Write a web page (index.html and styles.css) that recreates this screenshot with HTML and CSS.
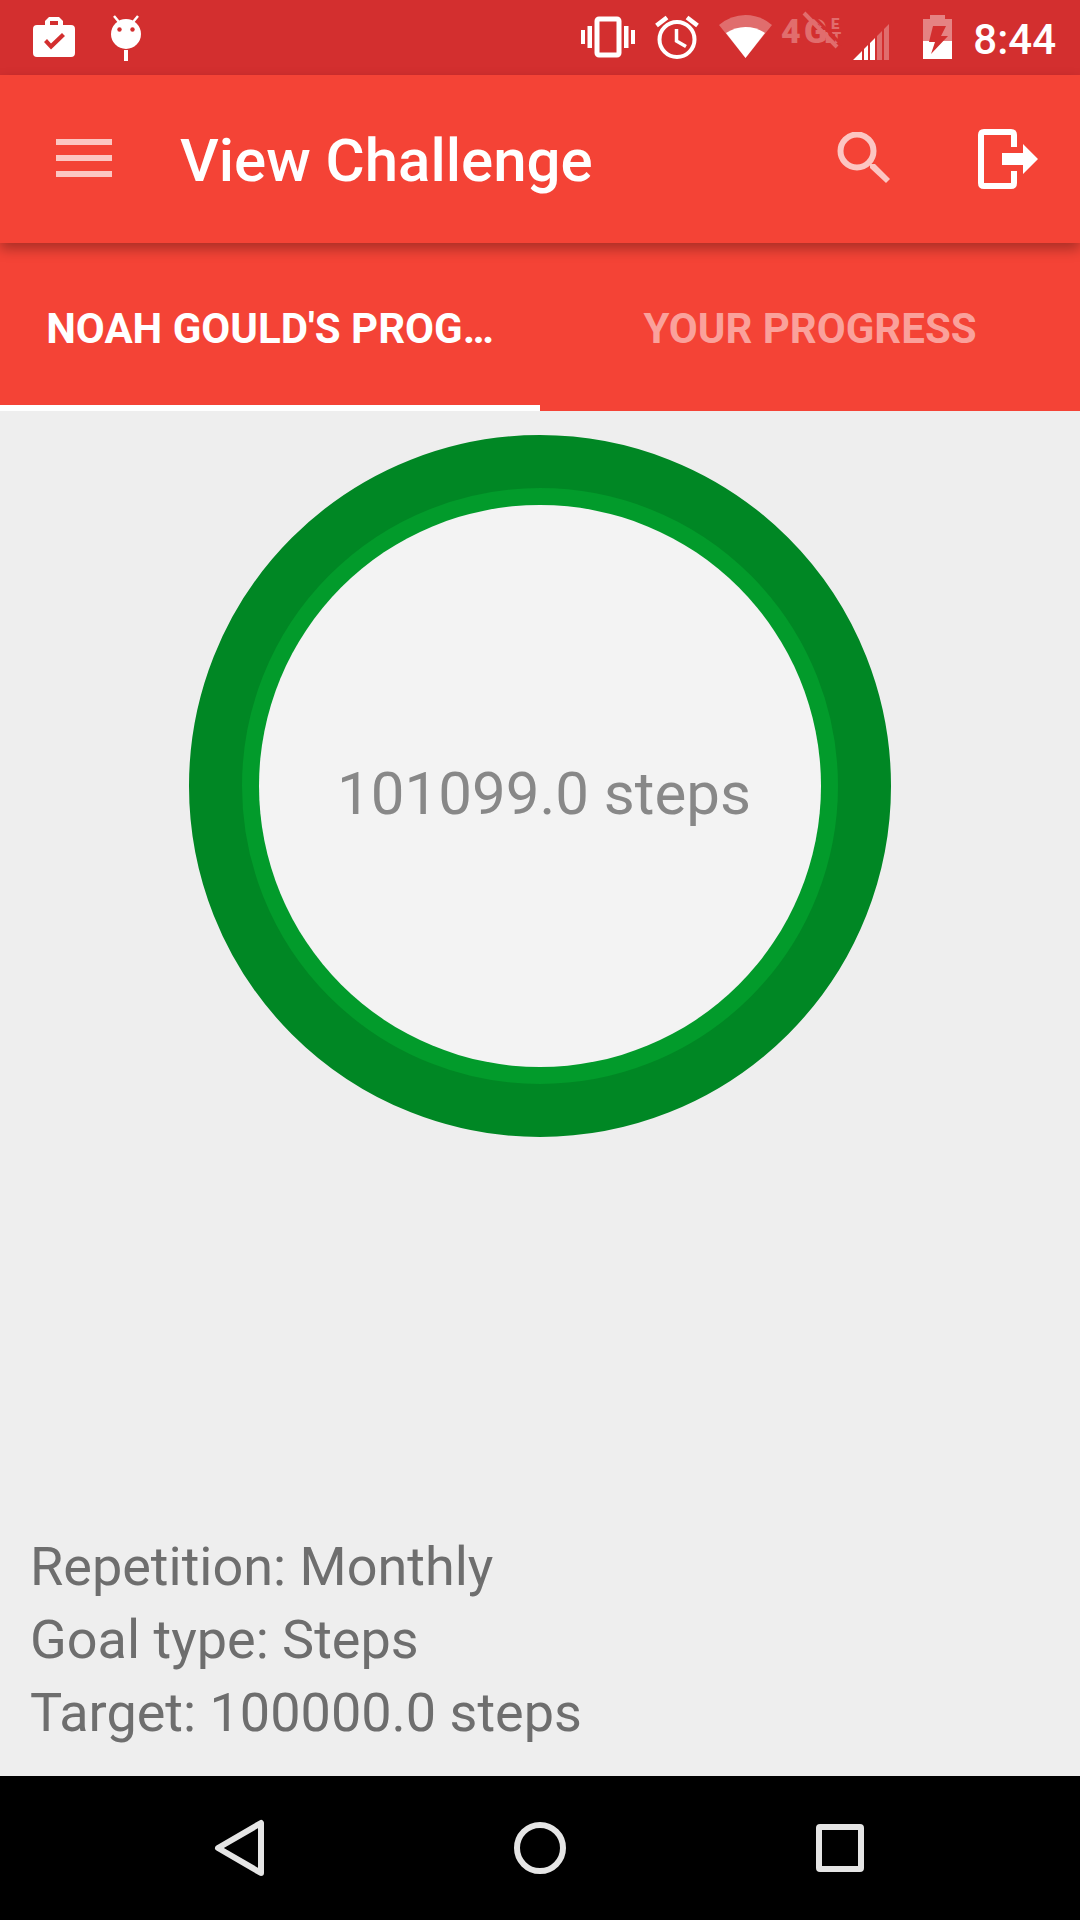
FILE: index.html
```html
<!DOCTYPE html>
<html lang="en">
<head>
<meta charset="utf-8">
<meta name="viewport" content="width=device-width, initial-scale=1">
<title>View Challenge</title>
<link rel="stylesheet" href="styles.css">
</head>
<body>
<div class="screen">
  <div class="status">
    <div class="status-group">
      <svg width="42" height="75" viewBox="0 0 42 75" aria-hidden="true">
        <path fill="#fff" fill-rule="evenodd" d="M4 25H12V21L16 17H26L30 21V25H38Q42 25 42 29V53Q42 57 38 57H4Q0 57 0 53V29Q0 25 4 25ZM17 21V25H25V21ZM11 42L18 49.500L32 36L29 33L18 43.500L14 39Z"/>
      </svg>
      <svg width="30" height="75" viewBox="0 0 30 75" aria-hidden="true">
        <path stroke="#fff" stroke-width="2.500" d="M3 16L8 22M27 16L22 22"/>
        <path stroke="#fff" stroke-width="4" d="M15 50V61"/>
        <circle cx="15" cy="34" r="15" fill="#fff"/>
        <circle cx="8.500" cy="29.500" r="2.200" fill="#d32f2f"/>
        <circle cx="21.500" cy="29.500" r="2.200" fill="#d32f2f"/>
      </svg>
    </div>
    <div class="status-group status-end">
      <svg width="68" height="75" viewBox="0 0 68 75" aria-hidden="true">
        <rect x="23" y="19" width="22" height="36" rx="2" fill="none" stroke="#fff" stroke-width="5"/>
        <path fill="#fff" d="M7 30h4v14h-4zM13.500 26h4.500v22h-4.500zM50 26h4.500v22H50zM57 30h4v14h-4z"/>
      </svg>
      <svg width="69" height="75" viewBox="0 0 69 75" aria-hidden="true">
        <circle cx="35" cy="39.500" r="17.500" fill="none" stroke="#fff" stroke-width="4"/>
        <path fill="none" stroke="#fff" stroke-width="3.500" d="M34.500 29V41L44 46.500"/>
        <path stroke="#fff" stroke-width="4.500" d="M14.500 25.500L25 17.500M45 17.500L55.500 25.500"/>
      </svg>
      <svg width="69" height="75" viewBox="0 0 69 75" aria-hidden="true">
        <path fill="#fff" fill-opacity=".3" d="M8 25Q20 15 34.500 15T61 25L34.500 58Z"/>
        <path fill="#fff" d="M15 33Q24 27 34.500 27T54 33L34.500 58Z"/>
      </svg>
      <svg class="network" width="66" height="75" viewBox="0 0 66 75" role="img" aria-label="4G LTE off">
        <text class="network-main" x="1 24" y="43">4G</text>
        <text class="network-sub" x="51" y="29">E</text>
        <text class="network-sub" x="45" y="43">LT</text>
        <path stroke="#d32f2f" stroke-width="3" d="M27 10L62 45"/>
        <path stroke="#e16d6d" stroke-width="4" d="M24 13L57 47"/>
      </svg>
      <svg width="54" height="75" viewBox="0 0 54 75" aria-hidden="true">
        <path fill="#fff" d="M7 60L16 51V60ZM18 60V49L22 45V60ZM24 60V43L29 38V60Z"/>
        <path fill="#fff" fill-opacity=".3" d="M31 60V36L36 31V60ZM38 60V29L43 24V60Z"/>
      </svg>
      <svg width="69" height="75" viewBox="0 0 69 75" aria-hidden="true">
        <path fill="#e58383" d="M23 19H30V15H45V19H52V41H23Z"/>
        <path fill="#fff" d="M23 41H52V59H23Z"/>
        <path fill="#d32f2f" d="M33 26H46L41 36H48L31 54L35 42H29Z"/>
      </svg>
      <time class="clock">8:44</time>
    </div>
  </div>

  <header class="toolbar">
    <button class="icon-button" aria-label="Menu">
      <svg width="56" height="48" viewBox="0 0 56 48"><path stroke="#fcc6c2" stroke-width="6" d="M0 7H56M0 23H56M0 39H56"/></svg>
    </button>
    <h1 class="title">View Challenge</h1>
    <button class="icon-button" aria-label="Search">
      <svg width="54" height="54" viewBox="0 0 54 54"><circle cx="20" cy="19" r="16.500" fill="none" stroke="#fcc6c2" stroke-width="6"/><path fill="#fcc6c2" d="M33 32H38L53 47L49 51L33 36Z"/></svg>
    </button>
    <button class="icon-button" aria-label="Log out">
      <svg width="62" height="62" viewBox="0 0 62 62"><path fill="none" stroke="#fff" stroke-width="6" d="M37 19V7Q37 4 34 4H7Q4 4 4 7V55Q4 58 7 58H34Q37 58 37 55V43"/><path fill="#fff" d="M25 25H46V16L61 31L46 46V37H25Z"/></svg>
    </button>
  </header>

  <nav class="tabs" role="tablist">
    <button class="tab tab-active" role="tab" aria-selected="true"><span class="tab-label">Noah Gould's prog…</span></button>
    <button class="tab" role="tab" aria-selected="false"><span class="tab-label">Your progress</span></button>
  </nav>

  <main class="content">
    <div class="ring"><p class="ring-value">101099.0 steps</p></div>
    <div class="details">
      <p>Repetition: Monthly</p>
      <p>Goal type: Steps</p>
      <p>Target: 100000.0 steps</p>
    </div>
  </main>

  <nav class="system-nav" aria-label="System">
    <button class="nav-button" aria-label="Back">
      <svg width="60" height="60" viewBox="0 0 60 60"><path d="M51 5V55L8 30Z"/></svg>
    </button>
    <button class="nav-button" aria-label="Home">
      <svg width="60" height="60" viewBox="0 0 60 60"><circle cx="30" cy="30" r="23"/></svg>
    </button>
    <button class="nav-button" aria-label="Recent apps">
      <svg width="60" height="60" viewBox="0 0 60 60"><rect x="9" y="9" width="42" height="42" rx="1"/></svg>
    </button>
  </nav>
</div>
</body>
</html>
```
FILE: styles.css
```css
* {
  box-sizing: border-box;
}

body,
p,
h1 {
  margin: 0;
}

body {
  font-family: Roboto, sans-serif;
  background: #eee;
}

button {
  padding: 0;
  border: 0;
  background: none;
  font: inherit;
  color: inherit;
}

svg {
  display: block;
  flex: none;
}

.screen {
  display: flex;
  flex-direction: column;
  min-height: 100vh;
}

.status {
  display: flex;
  justify-content: space-between;
  height: 75px;
  padding: 0 24px 0 33px;
  background: #d32f2f;
  color: #fff;
}

.status-group {
  display: flex;
  align-items: center;
  gap: 36px;
}

.status-end {
  gap: 0;
}

.network {
  fill: #e16d6d;
  font-weight: 900;
}

.network-main {
  font-size: 34px;
}

.network-sub {
  font-size: 15px;
}

.clock {
  padding: 4px 0 0 4px;
  font-size: 42px;
  font-weight: 500;
  line-height: 48px;
}

.toolbar {
  position: relative;
  display: flex;
  align-items: center;
  height: 168px;
  padding: 0 0 0 12px;
  background: #f44336;
  color: #fff;
  box-shadow: 0 6px 12px rgba(0, 0, 0, 0.3);
}

.icon-button {
  display: grid;
  place-items: center;
  width: 144px;
  height: 144px;
}

.title {
  flex: 1;
  padding: 4px 0 0 24px;
  font-size: 60px;
  font-weight: 500;
  line-height: 72px;
}

.tabs {
  display: grid;
  grid-template-columns: 1fr 1fr;
  height: 168px;
  background: #f44336;
  color: #faa19b;
}

.tab {
  min-width: 0;
  padding: 10px 36px 0;
  border-bottom: 6px solid transparent;
  font-size: 42px;
  font-weight: 700;
  line-height: 48px;
  text-transform: uppercase;
}

.tab-active {
  border-bottom-color: #fff;
  color: #fff;
}

.tab-label {
  display: block;
  overflow: hidden;
  text-overflow: ellipsis;
  white-space: nowrap;
}

.content {
  flex: 1;
  display: flex;
  flex-direction: column;
  align-items: center;
  justify-content: space-between;
  padding: 24px 30px 27px;
  background: #eee;
}

.ring {
  display: grid;
  width: 702px;
  height: 702px;
  padding: 17px;
  border: 53px solid #008724;
  border-radius: 50%;
  background: #029b2b;
}

.ring-value {
  display: grid;
  place-items: center;
  padding: 16px 0 0 8px;
  border-radius: 50%;
  background: #f3f3f3;
  font-size: 60px;
  line-height: 72px;
  color: #888;
}

.details {
  align-self: stretch;
  font-size: 54px;
  line-height: 73px;
  color: #6e6e6e;
}

.system-nav {
  display: flex;
  justify-content: center;
  gap: 60px;
  height: 144px;
  background: #000;
}

.nav-button {
  display: grid;
  place-items: center;
  width: 240px;
}

.nav-button svg {
  fill: none;
  stroke: #e5e5e5;
  stroke-width: 6px;
  stroke-linejoin: round;
}
```
